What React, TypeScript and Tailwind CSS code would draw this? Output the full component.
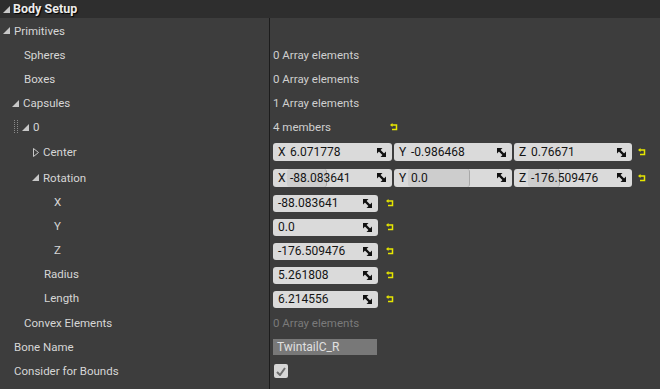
import React from "react";

const font = { fontFamily: "Roboto, 'Noto Sans', sans-serif" };

function Expanded() {
  return (
    <svg width="7" height="7" viewBox="0 0 7 7" className="shrink-0">
      <polygon points="7,0 7,7 0,7" fill="#c8c8c8" />
    </svg>
  );
}

function Collapsed() {
  return (
    <svg width="6" height="9" viewBox="0 0 6 9" className="shrink-0">
      <polygon points="0.5,0.5 5.5,4.5 0.5,8.5" fill="none" stroke="#c8c8c8" strokeWidth="1" />
    </svg>
  );
}

function Grip() {
  return (
    <svg width="4" height="14" viewBox="0 0 4 14" className="shrink-0">
      {[0, 1, 2, 3, 4, 5, 6].map((i) => (
        <g key={i}>
          <rect x="0" y={i * 2} width="1" height="1" fill="#8a8a8a" />
          <rect x="3" y={i * 2} width="1" height="1" fill="#8a8a8a" />
        </g>
      ))}
    </svg>
  );
}

function SpinIcon() {
  return (
    <svg width="9" height="9" viewBox="0 0 9 9" className="shrink-0">
      <polygon points="0,0 5.5,0 0,5.5" fill="#111" />
      <polygon points="9,9 3.5,9 9,3.5" fill="#111" />
      <line x1="1" y1="1" x2="8" y2="8" stroke="#111" strokeWidth="2.4" />
    </svg>
  );
}

function Revert() {
  return (
    <svg width="8" height="8" viewBox="0 0 8 8" className="shrink-0">
      <polygon points="0,2 2.5,0 2.5,4" fill="#e6e600" />
      <polyline points="2,2 6.5,2 6.5,6.5 2,6.5" fill="none" stroke="#e6e600" strokeWidth="1.5" />
    </svg>
  );
}

function Field({
  value,
  width = "w-[105px]",
  height = "h-[17px]",
  label,
  fill,
}: {
  value: string;
  width?: string;
  height?: string;
  label?: string;
  fill?: number;
}) {
  return (
    <div className={`${width} ${height} bg-[#dadada] rounded-[3px] flex items-center relative overflow-hidden text-[12px] text-[#141414]`}>
      {label && <span className="pl-[5px] w-[15px] shrink-0 relative z-10">{label}</span>}
      {fill !== undefined && (
        <div
          className="absolute top-0 bottom-0 left-[14px] bg-[#cdcdcd] rounded-[3px] border-r border-[#a8a8a8]"
          style={{ width: fill }}
        />
      )}
      <span className={`${label ? "pl-[2px]" : "pl-[5px]"} flex-1 relative z-10 leading-none`}>{value}</span>
      <div className="pr-[6px] relative z-10 flex items-center">
        <SpinIcon />
      </div>
    </div>
  );
}

type Row = {
  h: string;
  indent: string;
  icon?: React.ReactNode;
  label: string;
  right?: React.ReactNode;
};

const vec = (a: [string, number?], b: [string, number?], c: [string, number?]) => (
  <div className="flex items-center gap-[2px]">
    <Field label="X" value={a[0]} width="w-[119px]" height="h-[18px]" fill={a[1]} />
    <Field label="Y" value={b[0]} width="w-[118px]" height="h-[18px]" fill={b[1]} />
    <Field label="Z" value={c[0]} width="w-[118px]" height="h-[18px]" fill={c[1]} />
    <div className="ml-[4px]">
      <Revert />
    </div>
  </div>
);

const single = (v: string) => (
  <div className="flex items-center gap-[8px] translate-y-[1px]">
    <Field value={v} />
    <Revert />
  </div>
);

const arr = (t: string, dim = false) => (
  <span className={`text-[11.5px] translate-y-[1px] ${dim ? "text-[#7a7a7a]" : "text-[#cfcfcf]"}`}>{t}</span>
);

const rows: Row[] = [
  { h: "h-[25px]", indent: "pl-[3px]", icon: <Expanded />, label: "Primitives" },
  { h: "h-[24px]", indent: "pl-[24px]", label: "Spheres", right: arr("0 Array elements") },
  { h: "h-[24px]", indent: "pl-[24px]", label: "Boxes", right: arr("0 Array elements") },
  { h: "h-[24px]", indent: "pl-[12px]", icon: <Expanded />, label: "Capsules", right: arr("1 Array elements") },
  {
    h: "h-[24px]",
    indent: "pl-[14px]",
    icon: (
      <div className="flex items-center gap-[4px]">
        <Grip />
        <Expanded />
      </div>
    ),
    label: "0",
    right: (
      <div className="flex items-center">
        {arr("4 members")}
        <div className="ml-[59px]">
          <Revert />
        </div>
      </div>
    ),
  },
  { h: "h-[26px]", indent: "pl-[33px]", icon: <Collapsed />, label: "Center", right: vec(["6.071778"], ["-0.986468"], ["0.76671"]) },
  { h: "h-[25px]", indent: "pl-[32px]", icon: <Expanded />, label: "Rotation", right: vec(["-88.083641", 40], ["0.0", 62], ["-176.509476", 32]) },
  { h: "h-[24px]", indent: "pl-[54px]", label: "X", right: single("-88.083641") },
  { h: "h-[24px]", indent: "pl-[54px]", label: "Y", right: single("0.0") },
  { h: "h-[24px]", indent: "pl-[54px]", label: "Z", right: single("-176.509476") },
  { h: "h-[24px]", indent: "pl-[44px]", label: "Radius", right: single("5.261808") },
  { h: "h-[24px]", indent: "pl-[44px]", label: "Length", right: single("6.214556") },
  { h: "h-[25px]", indent: "pl-[24px]", label: "Convex Elements", right: arr("0 Array elements", true) },
  {
    h: "h-[24px]",
    indent: "pl-[14px]",
    label: "Bone Name",
    right: (
      <div className="w-[104px] h-[16px] bg-[#787878] flex items-center pl-[4px] text-[12px] text-[#e0e0e0]">TwintailC_R</div>
    ),
  },
  {
    h: "h-[24px]",
    indent: "pl-[14px]",
    label: "Consider for Bounds",
    right: (
      <div className="ml-[1px] w-[14px] h-[14px] rounded-[2px] bg-[#d6d6d6] flex items-center justify-center">
        <svg width="10" height="9" viewBox="0 0 10 9">
          <polyline points="1,5 4,8 9,1" fill="none" stroke="#6e6e6e" strokeWidth="2" />
        </svg>
      </div>
    ),
  },
];

export default function App() {
  return (
    <div className="w-[660px] h-[389px] bg-[#3d3d3d] overflow-hidden select-none" style={font}>
      <div className="h-[18px] bg-[#2e2e2e] flex items-center pl-[3px] gap-[3px]">
        <Expanded />
        <span className="text-[12.5px] font-bold text-[#ececec] [text-shadow:1px_1px_1px_#000]">Body Setup</span>
      </div>
      <div className="flex flex-col">
        {rows.map((r, i) => (
          <div key={i} className={`flex ${r.h}`}>
            <div className={`w-[270px] shrink-0 border-r border-[#1c1c1c] flex items-center gap-[4px] ${r.indent}`}>
              {r.icon}
              <span className="text-[11.5px] text-[#d6d6d6] translate-y-[1px]">{r.label}</span>
            </div>
            <div className="flex-1 flex items-center pl-[3px]">{r.right}</div>
          </div>
        ))}
        <div className="flex h-[6px]">
          <div className="w-[270px] border-r border-[#1c1c1c]" />
        </div>
      </div>
    </div>
  );
}
